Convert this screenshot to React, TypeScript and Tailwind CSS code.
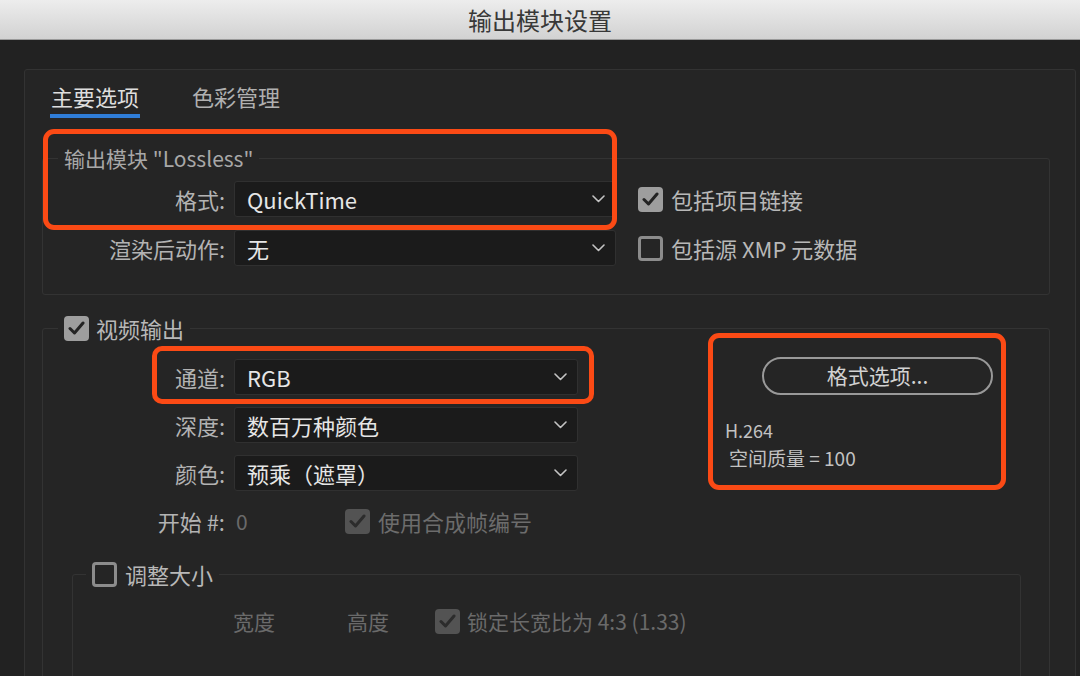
import React from "react";

const Chevron = () => (
    <svg width="13" height="8" viewBox="0 0 13 8" fill="none">
        <polyline points="1,1 6.5,6.5 12,1" stroke="#c4c4c4" strokeWidth="1.6" strokeLinecap="round" strokeLinejoin="round" />
    </svg>
);

function Select({ value, width }: { value: string; width: string }) {
    return (
        <div className={`${width} h-[36px] flex items-center justify-between pl-[12px] pr-[10px] bg-[#1b1b1b] border border-[#303030] rounded-[3px]`}>
            <span className="text-[22px] text-[#e6e6e6] leading-none">{value}</span>
            <Chevron />
        </div>
    );
}

function Checkbox({ checked, dim }: { checked: boolean; dim?: boolean }) {
    if (!checked) {
        return <div className="w-[25px] h-[25px] shrink-0 rounded-[4px] border-[3px] border-[#8c8c8c]" />;
    }
    return (
        <div className={`w-[25px] h-[25px] shrink-0 rounded-[4px] flex items-center justify-center ${dim ? "bg-[#535353]" : "bg-[#9e9e9e]"}`}>
            <svg width="17" height="14" viewBox="0 0 17 14" fill="none">
                <polyline
                    points="2,7.5 6.5,12 15,2"
                    stroke={dim ? "#2c2c2c" : "#242424"}
                    strokeWidth="3"
                    strokeLinecap="round"
                    strokeLinejoin="round"
                />
            </svg>
        </div>
    );
}

function Label({ children }: { children: React.ReactNode }) {
    return <div className="w-[191px] pr-[9px] text-right text-[22px] text-[#b3b3b3] leading-none">{children}</div>;
}

export default function App() {
    return (
        <div className="relative w-[1080px] h-[676px] overflow-hidden bg-[#222222] flex flex-col font-['Noto_Sans_CJK_SC',sans-serif]">
            {/* title bar */}
            <div className="h-[40px] shrink-0 flex items-center justify-center bg-linear-to-b from-[#ededed] to-[#d2d2d2] border-b border-[#9a9a9a] text-[24px] text-[#383838]">
                输出模块设置
            </div>

            {/* main panel */}
            <div className="ml-[24px] mr-[4px] mt-[29px] flex-1 border border-[#333333] rounded-[3px] bg-[#252525]">
                <div className="flex pl-[25px] pt-[12px] gap-[52px]">
                    <div className="flex flex-col">
                        <span className="text-[22px] leading-[28px] text-[#dedede] px-[1px]">主要选项</span>
                        <div className="mt-[4px] h-[4px] bg-[#2f7dd8]" />
                    </div>
                    <span className="text-[22px] leading-[28px] text-[#b0b0b0]">色彩管理</span>
                </div>

                {/* output module group */}
                <fieldset className="mt-[26px] ml-[17px] mr-[25px] border border-[#333333] rounded-[3px] pb-[28px]">
                    <legend className="ml-[15px] px-[6px] text-[21px] leading-[28px] text-[#a8a8a8]">输出模块 "Lossless"</legend>
                    <div className="mt-[9px] flex flex-col gap-[13px]">
                        <div className="flex items-center h-[36px]">
                            <Label>格式:</Label>
                            <Select value="QuickTime" width="w-[382px]" />
                            <div className="ml-[22px]"><Checkbox checked /></div>
                            <span className="ml-[8px] text-[22px] text-[#b8b8b8] leading-none">包括项目链接</span>
                        </div>
                        <div className="flex items-center h-[36px]">
                            <Label>渲染后动作:</Label>
                            <Select value="无" width="w-[382px]" />
                            <div className="ml-[22px]"><Checkbox checked={false} /></div>
                            <span className="ml-[8px] text-[22px] text-[#b8b8b8] leading-none">包括源 XMP 元数据</span>
                        </div>
                    </div>
                </fieldset>

                {/* video output group */}
                <fieldset className="mt-[19px] ml-[17px] mr-[25px] border border-[#333333] rounded-[3px] pb-[200px]">
                    <legend className="ml-[15px] px-[6px]">
                        <div className="flex items-center gap-[7px] h-[28px]">
                            <Checkbox checked />
                            <span className="text-[22px] text-[#b8b8b8] leading-none">视频输出</span>
                        </div>
                    </legend>
                    <div className="mt-[17px] flex">
                        <div className="flex flex-col gap-[12px]">
                            <div className="flex items-center h-[36px]">
                                <Label>通道:</Label>
                                <Select value="RGB" width="w-[344px]" />
                            </div>
                            <div className="flex items-center h-[36px]">
                                <Label>深度:</Label>
                                <Select value="数百万种颜色" width="w-[344px]" />
                            </div>
                            <div className="flex items-center h-[36px]">
                                <Label>颜色:</Label>
                                <Select value="预乘（遮罩）" width="w-[344px]" />
                            </div>
                            <div className="flex items-center h-[36px]">
                                <Label>开始 #:</Label>
                                <div className="w-[111px] pl-[2px] text-[21px] text-[#6a6a6a] leading-none">0</div>
                                <Checkbox checked dim />
                                <span className="ml-[8px] text-[22px] text-[#6c6c6c] leading-none">使用合成帧编号</span>
                            </div>
                        </div>
                        <div className="ml-[147px] -mt-[2px] flex flex-col">
                            <div className="ml-[37px] w-[231px] h-[38px] rounded-full border-2 border-[#999999] flex items-center justify-center text-[21px] text-[#d2d2d2]">
                                格式选项...
                            </div>
                            <div className="mt-[22px] text-[18px] leading-[26px] text-[#c2c2c2]">H.264</div>
                            <div className="pl-[4px] text-[19px] leading-[30px] text-[#c2c2c2]">空间质量 = 100</div>
                        </div>
                    </div>

                    {/* resize group */}
                    <fieldset className="mt-[21px] ml-[29px] mr-[28px] border border-[#333333] rounded-[3px] pb-[60px]">
                        <legend className="ml-[13px] px-[6px]">
                            <div className="flex items-center gap-[8px] h-[28px]">
                                <Checkbox checked={false} />
                                <span className="text-[22px] text-[#b8b8b8] leading-none">调整大小</span>
                            </div>
                        </legend>
                        <div className="mt-[15px] h-[36px] flex items-center pl-[160px] text-[21px] text-[#6a6a6a] leading-none">
                            <div className="w-[114px]">宽度</div>
                            <div className="w-[88px]">高度</div>
                            <Checkbox checked dim />
                            <span className="ml-[7px]">锁定长宽比为 4:3 (1.33)</span>
                        </div>
                    </fieldset>
                </fieldset>
            </div>

            {/* annotation highlights */}
            <div className="absolute left-[43px] top-[129px] w-[574px] h-[101px] border-[5px] border-[#fb4a15] rounded-[11px]" />
            <div className="absolute left-[152px] top-[346px] w-[442px] h-[58px] border-[5px] border-[#fb4a15] rounded-[10px]" />
            <div className="absolute left-[708px] top-[333px] w-[298px] h-[157px] border-[5px] border-[#fb4a15] rounded-[11px]" />
        </div>
    );
}
